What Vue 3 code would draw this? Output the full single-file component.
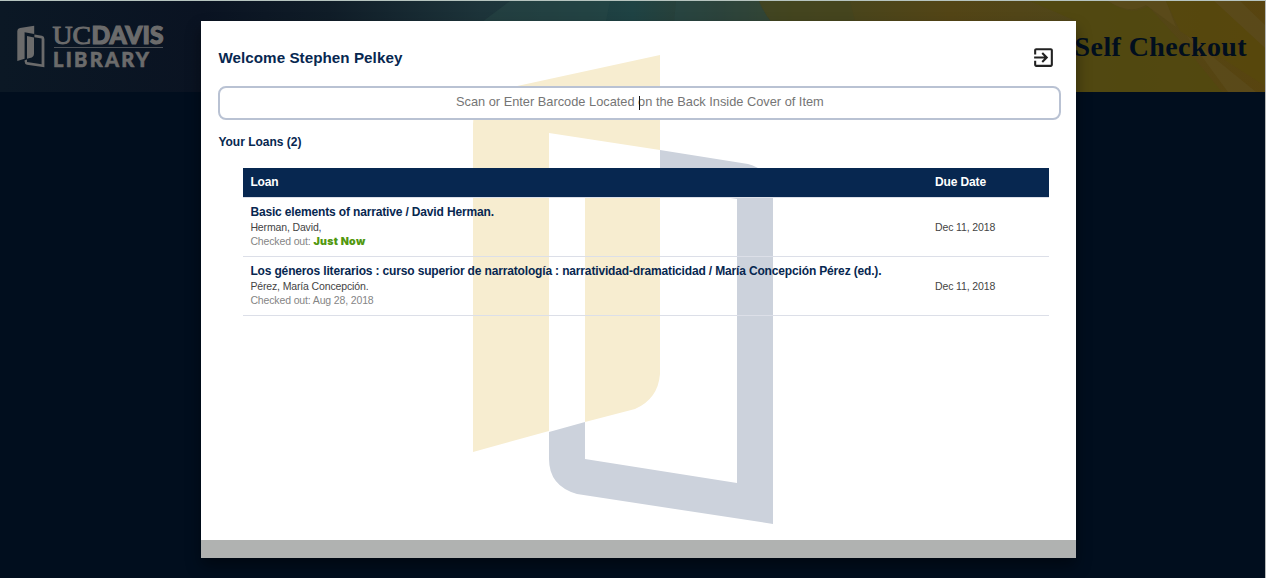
<script setup>
const loans = [
  { title: 'Basic elements of narrative / David Herman.', author: 'Herman, David,', out: 'Just Now', fresh: true, due: 'Dec 11, 2018' },
  { title: 'Los géneros literarios : curso superior de narratología : narratividad-dramaticidad / María Concepción Pérez (ed.).', author: 'Pérez, María Concepción.', out: 'Aug 28, 2018', fresh: false, due: 'Dec 11, 2018' },
]
</script>

<template>
  <div class="page">
    <header class="banner">
      <svg class="banner-art" viewBox="0 0 1265 91" preserveAspectRatio="none" aria-hidden="true">
        <defs>
          <linearGradient id="sky" x1="0" x2="1265" y1="0" y2="0" gradientUnits="userSpaceOnUse">
            <stop offset="0" stop-color="#0b1825" />
            <stop offset=".16" stop-color="#0a1322" />
            <stop offset=".26" stop-color="#101d28" />
            <stop offset=".38" stop-color="#1d343a" />
            <stop offset=".5" stop-color="#1f4344" />
            <stop offset=".57" stop-color="#303f32" />
            <stop offset=".63" stop-color="#44451f" />
            <stop offset=".75" stop-color="#534516" />
            <stop offset=".86" stop-color="#51471a" />
            <stop offset="1" stop-color="#58440f" />
          </linearGradient>
        </defs>
        <path fill="url(#sky)" d="M0 0H1265V91H0z" />
        <path fill="#284846" opacity=".5" d="M510 0H610L604 30H470z" />
        <path fill="#284846" opacity=".5" d="M676 0H759Q764 12 772 22H674z" />
        <path fill="#45461f" opacity=".7" d="M759 0H850L860 40H790Q768 22 759 0z" />
        <path fill="#51480f" opacity=".8" d="M1030 0H1108Q1130 16 1148 5L1180 40L1222 91H1076V20z" />
        <path fill="#5b4b1c" opacity=".8" d="M1108 0H1166L1176 26L1146 4Q1130 14 1108 0zM1214 0H1240L1265 24V47zM1186 34L1256 91H1228z" />
        <path fill="#57480c" opacity=".7" d="M1166 0H1214L1265 47V85L1180 30z" />
      </svg>
      <div class="brand">
        <svg class="brand-mark" viewBox="17 25 28 43" aria-hidden="true">
          <path d="M17.3 61V31Q17.3 28.5 20 28L34.2 25.8V34L24.6 32.2V58.8zM27 36L34 37.4V54Q34 56.6 31.8 57.4L27 58.7z" />
          <path d="M34.4 34.4L42 35.8Q44.4 36.3 44.4 39V67.3L27 64.7Q24.6 64 24.6 61.5V60.2L27 59.4V62L41.6 64.3V38.4L34.4 37.2z" />
        </svg>
        <svg class="brand-name" viewBox="0 0 112 48" role="img" aria-label="UC Davis Library">
          <text class="uc" x="-.5" y="19.5" textLength="38.5" lengthAdjust="spacingAndGlyphs">UC</text>
          <text class="davis" x="38.5" y="19.5" textLength="72" lengthAdjust="spacingAndGlyphs">DAVIS</text>
          <path d="M1 23.5H110" />
          <text class="library" x="0" y="43" textLength="96" lengthAdjust="spacing">LIBRARY</text>
        </svg>
      </div>
      <h1>Self Checkout</h1>
    </header>

    <main class="dialog">
      <svg class="watermark" viewBox="473 55 300 470" aria-hidden="true">
        <path fill="#f7edd0" d="M473 452V124Q473 96 503 89L660 55V150L549 133V431zM585 175L660 187V374Q658 399 635 409L585 422z" />
        <path fill="#ccd2dc" d="M660 150L748 164Q773 171 773 197V524L577 494Q549 486 549 459V432L585 422V459L737 483V199L660 187z" />
      </svg>
      <div class="content">
        <div class="heading">
          <h2>Welcome Stephen Pelkey</h2>
          <svg class="exit" viewBox="0 0 24 24"><path d="M10.09 15.59L11.5 17l5-5-5-5-1.41 1.41L12.67 11H3v2h9.67l-2.58 2.59zM19 3H5c-1.11 0-2 .9-2 2v4h2V5h14v14H5v-4H3v4c0 1.1.89 2 2 2h14c1.1 0 2-.9 2-2V5c0-1.1-.9-2-2-2z" /></svg>
        </div>
        <div class="scan"><span>Scan or Enter Barcode Located on the Back Inside Cover of Item</span><i class="caret"></i></div>
        <h3>Your Loans (2)</h3>
        <div class="table">
          <div class="row head"><span>Loan</span><span>Due Date</span></div>
          <div v-for="loan in loans" :key="loan.title" class="row">
            <div>
              <div class="title">{{ loan.title }}</div>
              <div class="author">{{ loan.author }}</div>
              <div class="out">Checked out: <span :class="{ fresh: loan.fresh }">{{ loan.out }}</span></div>
            </div>
            <div class="due">{{ loan.due }}</div>
          </div>
        </div>
      </div>
      <footer></footer>
    </main>
  </div>
</template>

<style>
body { margin: 0; overflow: hidden; }
</style>

<style scoped>
.page { box-sizing: border-box; width: 1266px; height: 578px; position: relative; background: #010e1e; border-top: 1px solid #b6c4bf; border-right: 1px solid #b5b8b8; font-family: "Liberation Sans", Arial, sans-serif; overflow: hidden; }
.banner { height: 91px; display: flex; justify-content: space-between; position: relative; }
.banner-art { position: absolute; inset: 0; width: 100%; height: 100%; }
.brand { position: relative; display: flex; padding: 24px 0 0 17px; }
.brand-mark { width: 28px; height: 43px; fill: #6b6b6b; }
.brand-name { width: 112px; height: 48px; margin-left: 8px; margin-top: -1px; fill: #6b6b6b; overflow: visible; }
.brand-name path { stroke: #4d5258; stroke-width: 1.2; }
.uc { font: 26px "Liberation Serif", serif; stroke: #6b6b6b; stroke-width: 1; }
.davis { font: 900 25px Lato, sans-serif; stroke: #6b6b6b; stroke-width: 1.2; }
.library { font: 900 20px Lato, sans-serif; stroke: #6b6b6b; stroke-width: .6; }
h1 { position: relative; margin: 0; padding: 29px 18px 0 0; font: bold 28px/34px "Liberation Serif", serif; color: #010e1e; letter-spacing: .4px; }
.dialog { position: absolute; left: 201px; top: 20px; width: 875px; height: 537px; background: #fff; box-shadow: 0 8px 14px rgba(0,0,0,.4); display: flex; flex-direction: column; }
.watermark { position: absolute; left: 272.4px; top: 34.3px; width: 300px; height: 470px; }
.content { position: relative; flex: 1; padding: 24px 14px 0 17.4px; }
.heading { display: flex; justify-content: space-between; height: 41px; }
h2 { margin: 3px 0 0; font-size: 15.2px; line-height: 20px; color: #072750; letter-spacing: .05px; }
.exit { width: 25px; height: 25px; margin-right: 6px; margin-top: -.3px; fill: #222; }
.scan { box-sizing: border-box; width: 843px; height: 34px; border: 2px solid #b9c2d3; border-radius: 8px; background: #fff; text-align: center; font-size: 12.8px; line-height: 27px; color: #757575; position: relative; }
.caret { position: absolute; left: 419px; top: 8px; width: 1px; height: 14px; background: #111; }
h3 { margin: 14px 0 17px; font-size: 12px; line-height: 17px; color: #072750; }
.table { width: 805.6px; margin-left: 25px; }
.row { box-sizing: border-box; display: grid; grid-template-columns: 684.7px 1fr; align-items: center; height: 59px; padding: 0 7px; border-bottom: 1px solid #dcdfe8; font-size: 10.5px; line-height: 15px; letter-spacing: -.14px; color: #444; }
.head { height: 30px; background: #072750; color: #fff; font-size: 12px; font-weight: bold; }
.title { font-size: 12px; font-weight: bold; color: #072750; white-space: nowrap; letter-spacing: -.155px; }
.out { color: #858585; line-height: 13px; margin-bottom: 2px; }
.fresh { color: #52980f; font: 900 10.6px/12px Inter, sans-serif; letter-spacing: .3px; }
footer { height: 18.4px; background: #b0b2b1; }
</style>
